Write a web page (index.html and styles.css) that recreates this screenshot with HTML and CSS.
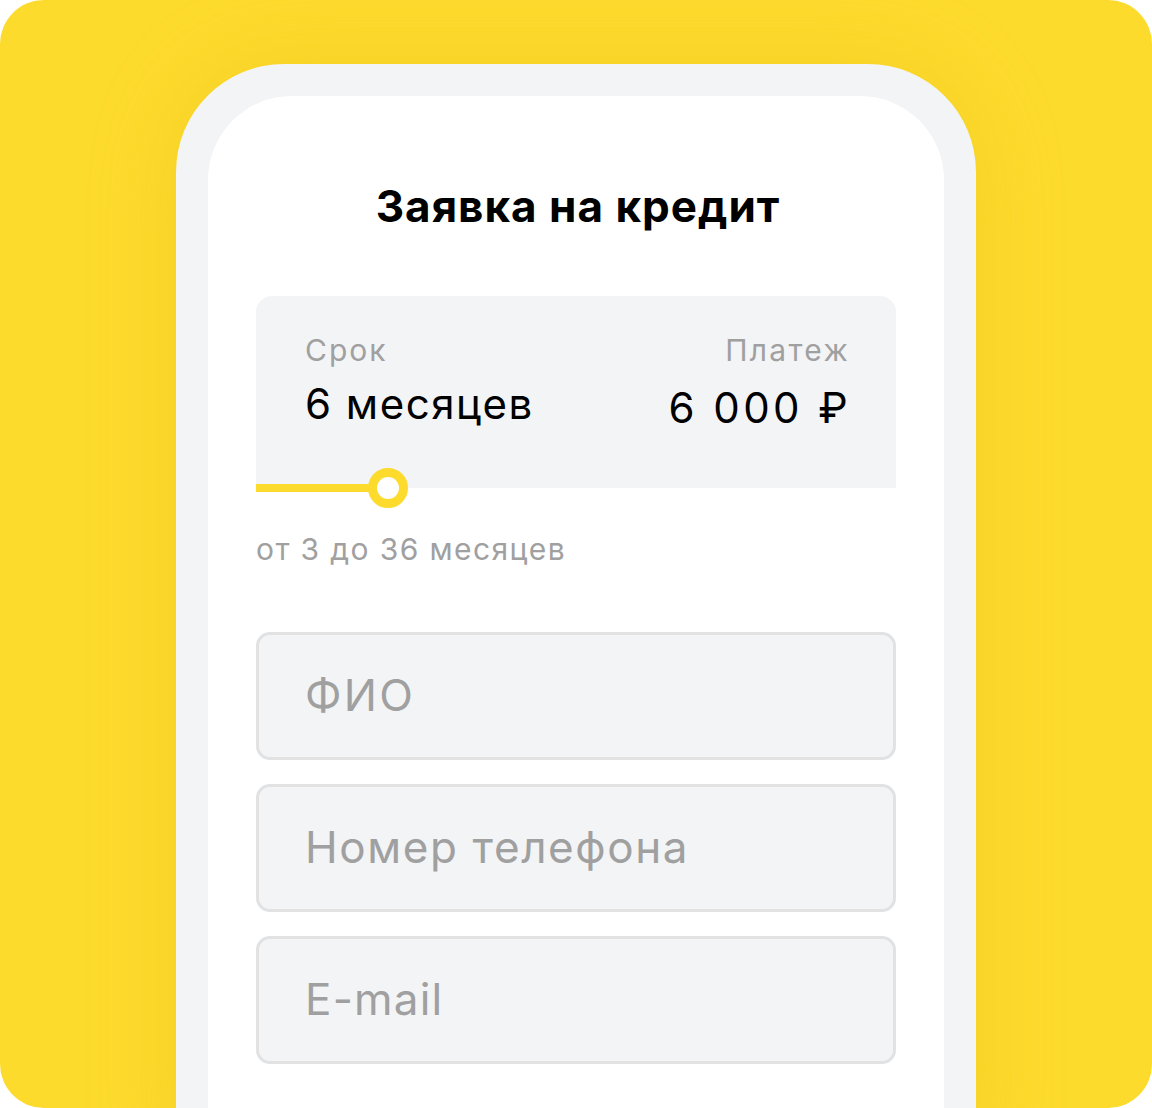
FILE: index.html
```html
<!DOCTYPE html>
<html lang="ru">
<head>
<meta charset="utf-8">
<title>Заявка на кредит</title>
<link rel="stylesheet" href="styles.css">
</head>
<body>
<div class="canvas">
  <div class="phone">
    <div class="screen">
      <h1 class="title">Заявка на кредит</h1>
      <div class="calc">
        <div class="calc-col">
          <div class="calc-label">Срок</div>
          <div class="calc-value">6 месяцев</div>
        </div>
        <div class="calc-col calc-col-right">
          <div class="calc-label calc-label-right">Платеж</div>
          <div class="calc-value calc-sum">6 000 ₽</div>
        </div>
      </div>
      <div class="slider">
        <div class="slider-track"></div>
        <div class="slider-thumb"></div>
      </div>
      <div class="hint">от 3 до 36 месяцев</div>
      <div class="fields">
        <div class="field field-fio">ФИО</div>
        <div class="field">Номер телефона</div>
        <div class="field field-mail">E-mail</div>
      </div>
    </div>
  </div>
</div>
</body>
</html>
```

FILE: styles.css
```css
* { box-sizing: border-box; }
html, body { margin: 0; padding: 0; background: #ffffff; }
body { font-family: Inter, "Noto Sans", sans-serif; }

.canvas {
  width: 1152px;
  height: 1108px;
  background: #fddb2d;
  border-radius: 44px;
  overflow: hidden;
  padding: 64px 176px 0;
}

.phone {
  width: 800px;
  height: 1100px;
  background: #f3f4f6;
  border-radius: 108px 108px 0 0;
  padding: 32px 32px 0;
  box-shadow: 0 0 90px rgba(215, 165, 0, 0.22);
}

.screen {
  height: 100%;
  background: #ffffff;
  border-radius: 84px 84px 0 0;
  padding: 86px 48px 0;
}

.title {
  margin: 0;
  text-align: center;
  font-size: 44px;
  line-height: 48px;
  font-weight: 700;
  letter-spacing: 1px;
  color: #000;
  padding-left: 4px;
}

.calc {
  margin-top: 66px;
  height: 192px;
  background: #f3f4f6;
  border-radius: 16px 16px 0 0;
  padding: 37px 48px 0 49px;
  display: flex;
  justify-content: space-between;
}

.calc-col-right { text-align: right; }

.calc-label {
  font-size: 30px;
  line-height: 34px;
  letter-spacing: 2px;
  color: #a0a0a0;
}

.calc-label-right { letter-spacing: 2.3px; margin-right: -2px; }

.calc-value {
  margin-top: 13px;
  font-size: 42px;
  line-height: 48px;
  letter-spacing: 1.5px;
  color: #000;
}

.calc-sum {
  margin-top: 17px;
  letter-spacing: 3.4px;
  margin-right: -3px;
}

.slider {
  position: relative;
  height: 0;
}

.slider-track {
  position: absolute;
  left: 0;
  top: -4px;
  width: 124px;
  height: 8px;
  background: #fddb2d;
}

.slider-thumb {
  position: absolute;
  left: 112px;
  top: -20px;
  width: 40px;
  height: 40px;
  border-radius: 50%;
  background: #fff;
  border: 9px solid #fddb2d;
}

.hint {
  margin-top: 44px;
  font-size: 30px;
  line-height: 34px;
  letter-spacing: 1.4px;
  color: #a0a0a0;
}

.fields {
  margin-top: 66px;
  display: flex;
  flex-direction: column;
  gap: 24px;
}

.field {
  height: 128px;
  background: #f3f4f6;
  border: 3px solid #e2e2e2;
  border-radius: 14px;
  padding: 0 46px 2px;
  display: flex;
  align-items: center;
  font-size: 44px;
  letter-spacing: 1.6px;
  color: #a0a0a0;
}

.field-fio { letter-spacing: 2.3px; }
.field-mail { letter-spacing: 1.2px; }
```
